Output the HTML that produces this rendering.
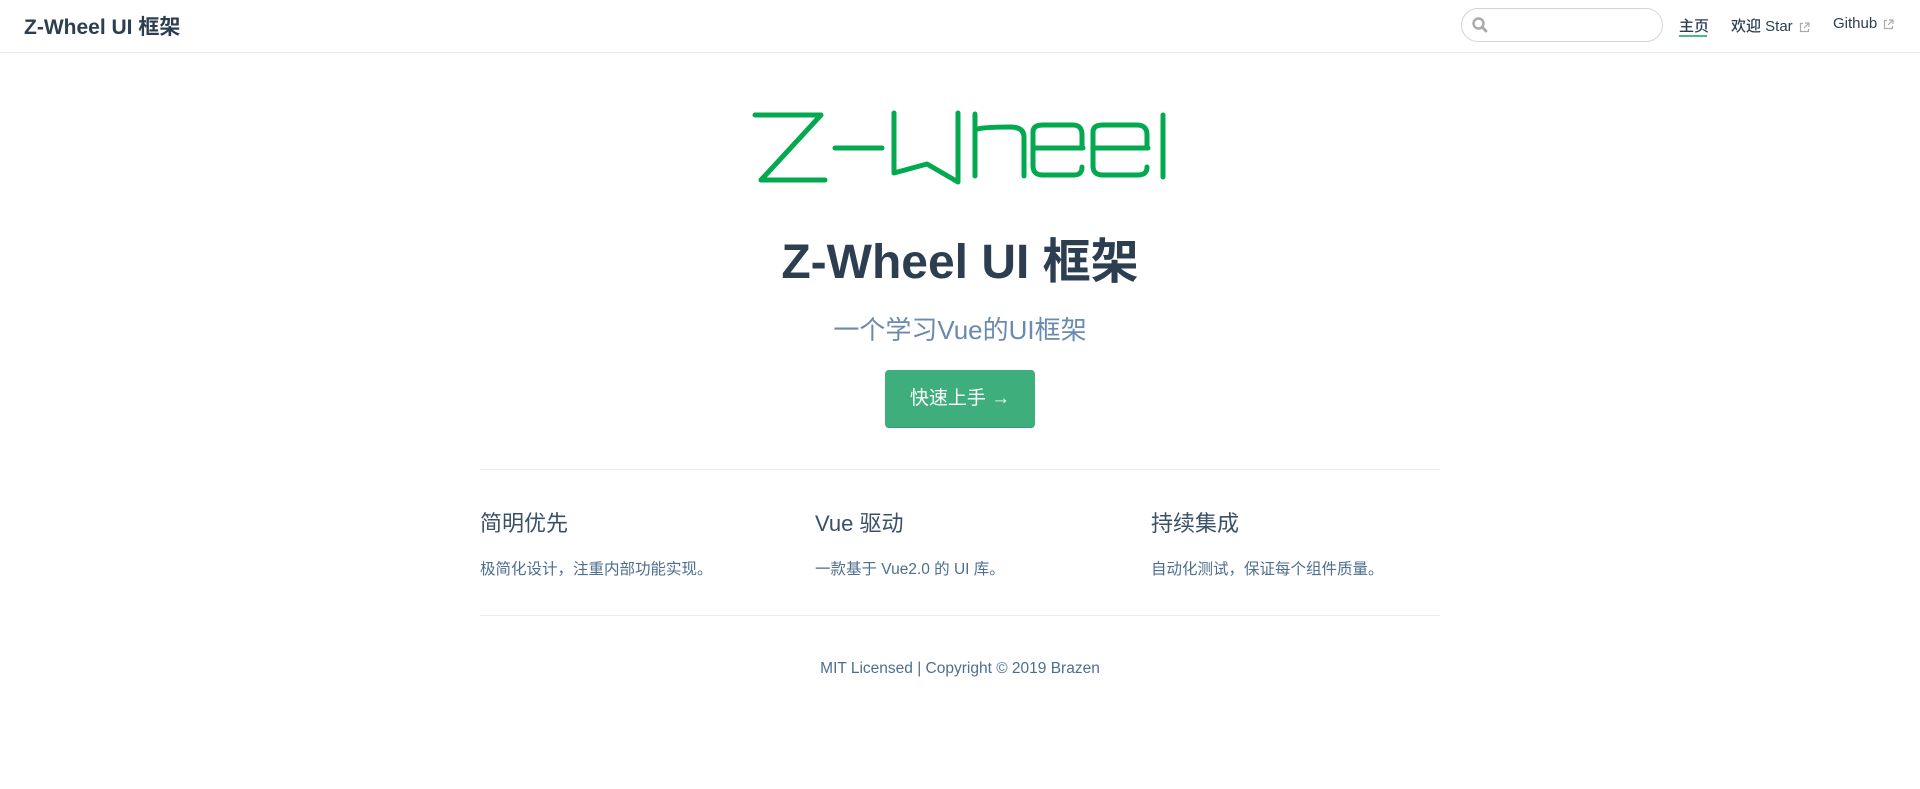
<!DOCTYPE html>
<html><head><meta charset="utf-8"><style>
*{margin:0;padding:0;box-sizing:border-box}
body{width:1920px;height:789px;background:#fff;font-family:"Liberation Sans","Noto Sans CJK SC",sans-serif;color:#2c3e50;position:relative;overflow:hidden}
.abs{position:absolute;white-space:nowrap}
.hdr{position:absolute;left:0;top:0;width:1920px;height:53px;border-bottom:1px solid #eaecef}
.search{position:absolute;left:1461px;top:8px;width:202px;height:34px;border:1px solid #cfd4db;border-radius:17px}
.nav{font-size:15px;font-weight:500;color:#2c3e50;top:15px}
.ext{display:inline-block;vertical-align:middle;margin-left:6px}
.line{position:absolute;left:480px;width:960px;height:1px;background:#eaecef}
.fh{font-size:22px;top:506px;color:#3a5068}
.fd{font-size:15.5px;top:557px;color:#4e6e8e}
</style></head><body>
<div class="hdr"></div>
<div class="abs" style="left:24px;top:11px;font-size:21px;font-weight:600;color:#2c3e50">Z-Wheel UI 框架</div>
<div class="search"></div>
<svg class="abs" style="left:1471px;top:16px" width="18" height="18" viewBox="0 0 18 18"><circle cx="7.5" cy="7.5" r="5" fill="none" stroke="#aaa" stroke-width="2.4"/><line x1="11" y1="11" x2="15" y2="15" stroke="#aaa" stroke-width="2.8" stroke-linecap="round"/></svg>
<div class="abs nav" style="left:1679px">主页</div>
<div class="abs" style="left:1679px;top:35px;width:28px;height:2px;background:#46bd87"></div>
<div class="abs nav" style="left:1731px">欢迎 Star<svg class="ext" width="11" height="11" viewBox="0 0 11 11"><path d="M4 1.5H1.5v8h8V7" fill="none" stroke="#aaa" stroke-width="1.2"/><path d="M6 1h4v4M10 1 5 6" fill="none" stroke="#aaa" stroke-width="1.2"/></svg></div>
<div class="abs nav" style="left:1833px">Github<svg class="ext" width="11" height="11" viewBox="0 0 11 11"><path d="M4 1.5H1.5v8h8V7" fill="none" stroke="#aaa" stroke-width="1.2"/><path d="M6 1h4v4M10 1 5 6" fill="none" stroke="#aaa" stroke-width="1.2"/></svg></div>

<svg class="abs" style="left:740px;top:100px" width="440" height="100" viewBox="0 0 440 100" fill="none" stroke="#02a94f" stroke-width="5" stroke-linecap="round" stroke-linejoin="round">
<path d="M15 15H81L21 80H85"/>
<path d="M95 48H142"/>
<path d="M154 13V73L187 64L218 82V13"/>
<path d="M235 14V76M235 30Q240 27 270 27Q284 27 284 37V76"/>
<path d="M343 48H293V32Q293 25 303 25H333Q342 25 342 35V48M293 48V66Q293 75 303 75H334Q342 75 342 67"/>
<path d="M408 48H353V32Q353 25 363 25H397Q407 25 407 35V48M353 48V66Q353 75 363 75H398Q407 75 407 67"/>
<path d="M423 15V77"/>
</svg>

<div class="abs" style="left:0;width:1920px;text-align:center;top:222px;font-size:48px;font-weight:700;color:#2c3e50">Z-Wheel UI 框架</div>
<div class="abs" style="left:0;width:1920px;text-align:center;top:310px;font-size:26px;color:#6a8bad">一个学习Vue的UI框架</div>
<div class="abs" style="left:885px;top:370px;width:150px;height:58px;background:#3eaf7c;border-radius:4px;border-bottom:1px solid #389d70;color:#fff;font-size:19px;text-align:center;line-height:58px">快速上手 →</div>

<div class="line" style="top:469px"></div>
<div class="abs fh" style="left:480px">简明优先</div>
<div class="abs fh" style="left:815px">Vue 驱动</div>
<div class="abs fh" style="left:1151px">持续集成</div>
<div class="abs fd" style="left:480px">极简化设计，注重内部功能实现。</div>
<div class="abs fd" style="left:815px">一款基于 Vue2.0 的 UI 库。</div>
<div class="abs fd" style="left:1151px">自动化测试，保证每个组件质量。</div>
<div class="line" style="top:615px"></div>
<div class="abs" style="left:0;width:1920px;text-align:center;top:660px;font-size:15.5px;color:#4e6e8e">MIT Licensed | Copyright © 2019 Brazen</div>
</body></html>
